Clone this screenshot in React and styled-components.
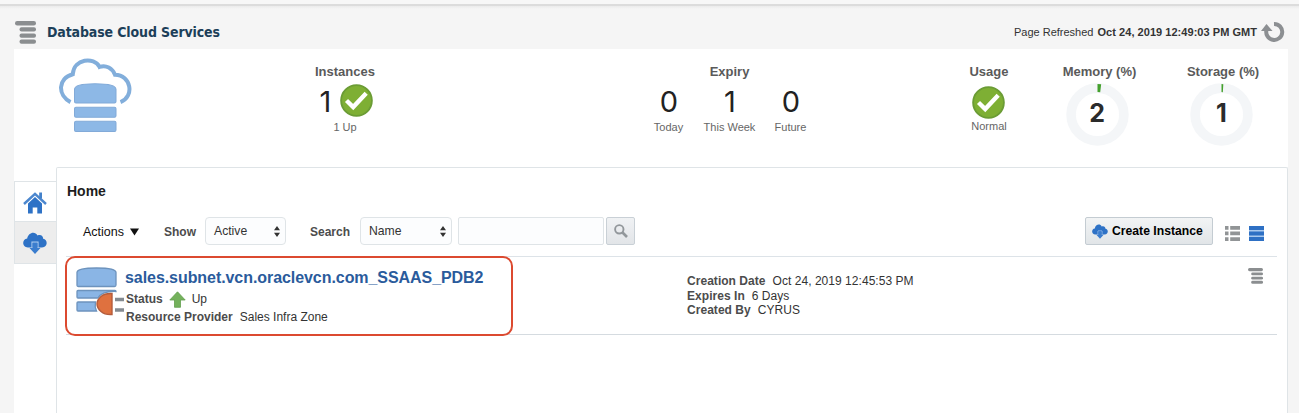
import React from "react";
import styled, { createGlobalStyle } from "styled-components";

const GlobalStyle = createGlobalStyle`
  * { box-sizing: border-box; }
  body {
    margin: 0;
    background: #f5f5f5;
    font-family: "Liberation Sans", Arial, sans-serif;
    font-size: 12px;
    color: #333;
    overflow: hidden;
  }
  svg { display: block; flex: none; }
`;

const Page = styled.div`
  height: 413px;
  display: flex;
  flex-direction: column;
  padding: 0 11px 0 14px;
  background: linear-gradient(#f7f7f7 0 4px, #dcdcdc 4px 6px, #ebebeb 6px, #f5f5f5 9px);
`;

const Header = styled.header`
  display: flex;
  align-items: flex-start;
  height: 49px;
  padding: 21px 3px 0 1px;
`;

const Title = styled.h1`
  margin: 2px 0 0 11px;
  flex: 1;
  font: bold 14px/18px "DejaVu Sans Condensed", "DejaVu Sans", Tahoma, sans-serif;
  font-stretch: condensed;
  letter-spacing: -0.13px;
  color: #1c3f59;
`;

const Refreshed = styled.div`
  margin: 4px 4px 0 0;
  font-size: 11px;
  line-height: 14px;
  color: #333;
  white-space: pre;
  b { margin-left: 1px; letter-spacing: 0.04px; }
`;

const Main = styled.main`
  flex: 1;
  display: flex;
  flex-direction: column;
  background: #fff;
`;

const Summary = styled.section`
  display: grid;
  grid-template-columns: 271px 120px 233px 183px 108px 120px 101px 13px 120px;
  height: 118px;
  padding-top: 15px;
`;

const CloudCell = styled.div`
  grid-column: 1;
  padding-left: 44px;
  margin-top: -6px;
`;

const Metric = styled.div`
  grid-column: ${(p) => p.$col};
  display: flex;
  flex-direction: column;
  align-items: center;
`;

const MetricLabel = styled.div`
  font-weight: bold;
  font-size: 13px;
  line-height: 16px;
  color: #5a5a5a;
`;

const MetricRow = styled.div`
  display: flex;
  align-items: center;
  margin-top: ${(p) => p.$top}px;
  margin-right: ${(p) => p.$shift || 0}px;
  height: 33px;
  gap: 7px;
`;

const BigNumber = styled.span`
  width: 16px;
  display: flex;
  justify-content: center;
  font: 29px/33px Inter, sans-serif;
  letter-spacing: -1px;
  padding-top: 1px;
  color: #222;
`;

const Caption = styled.div`
  margin-top: ${(p) => p.$top}px;
  font-size: 11px;
  line-height: 14px;
  color: #666;
`;

const ExpiryGrid = styled.div`
  display: grid;
  grid-template-columns: repeat(3, 61px);
`;

const ExpiryItem = styled.div`
  display: flex;
  flex-direction: column;
  align-items: center;
`;

const GaugeBox = styled.div`
  display: grid;
  place-items: center;
  margin: 3px ${(p) => p.$shift}px 0 0;
  > * { grid-area: 1 / 1; }
`;

const GaugeValue = styled.span`
  font: bold 25px/30px Inter, sans-serif;
  margin-top: -3px;
  color: #2b2b2b;
`;

const Body = styled.div`
  flex: 1;
  display: flex;
`;

const Tabs = styled.nav`
  width: 42px;
  padding-top: 14px;
`;

const Tab = styled.div`
  height: ${(p) => (p.$active ? "41px" : "42px")};
  display: flex;
  align-items: center;
  justify-content: center;
  padding: ${(p) => (p.$active ? "2px 1px 0 0" : "0 1px 0 0")};
  border: 1px solid #dfe4e7;
  border-right: 0;
  border-top-width: ${(p) => (p.$active ? "1px" : "0")};
  background: ${(p) => (p.$active ? "#fff" : "#ededed")};
`;

const Panel = styled.section`
  flex: 1;
  border: 1px solid #dfe4e7;
  border-bottom: 0;
  border-radius: 2px 2px 0 0;
  padding: 0 10px 0 10px;
`;

const PanelTitle = styled.h2`
  margin: 14px 0 16px;
  font-size: 14px;
  line-height: 18px;
  color: #1d1d1d;
`;

const Toolbar = styled.div`
  display: flex;
  align-items: center;
  height: 30px;
`;

const ActionsMenu = styled.div`
  display: flex;
  align-items: center;
  gap: 6px;
  width: 81px;
  margin: 2px 0 0 16px;
  font-size: 12.5px;
  color: #111;
`;

const FieldLabel = styled.label`
  width: ${(p) => p.$w}px;
  padding-top: 1px;
  font-weight: bold;
  color: #4c4c4c;
`;

const Select = styled.div`
  display: flex;
  align-items: center;
  justify-content: space-between;
  width: ${(p) => p.$w}px;
  height: 28px;
  margin-right: ${(p) => p.$gap}px;
  padding: 0 5px 0 8px;
  border: 1px solid #dfe4e7;
  border-radius: 4px;
  background: #fcfdfe;
  font-size: 12.2px;
`;

const SearchInput = styled.div`
  width: 146px;
  height: 28px;
  border: 1px solid #dfe4e7;
  border-radius: 2px;
  background: #fcfdfe;
`;

const SearchButton = styled.div`
  display: grid;
  place-items: center;
  width: 29px;
  height: 28px;
  margin-left: 2px;
  border: 1px solid #c9d0d6;
  border-radius: 2px;
  background: linear-gradient(#f0f2f4, #e2e5e8);
`;

const CreateButton = styled.div`
  display: flex;
  align-items: center;
  gap: 4px;
  width: 128px;
  height: 28px;
  margin: 0 12px 0 auto;
  padding-left: 6px;
  border: 1px solid #c4ccd2;
  border-radius: 2px;
  background: linear-gradient(#f2f4f5, #e1e5e8);
  font-weight: bold;
  font-size: 12.2px;
  color: #000;
  white-space: nowrap;
`;

const ViewIcons = styled.div`
  display: flex;
  gap: 9px;
  margin: 4px 13px 0 0;
`;

const InstanceRow = styled.div`
  position: relative;
  display: flex;
  height: 79px;
  margin: 10px 0 0 -1px;
  padding: 10px 14px 0 10px;
  border-top: 1px solid #dde3e8;
  border-bottom: 1px solid #d5dbe0;
`;

const RowMenu = styled.div`
  padding-top: 1px;
`;

const Highlight = styled.div`
  position: absolute;
  left: -1px;
  top: -1px;
  width: 448px;
  height: 80px;
  border: 2px solid #dc4a30;
  border-radius: 10px;
`;

const Info = styled.div`
  width: 561px;
  white-space: nowrap;
`;

const InstanceLink = styled.div`
  padding-top: 1px;
  font-weight: bold;
  font-size: 16px;
  line-height: 20px;
  color: #2a5b9c;
  letter-spacing: -0.065px;
`;

const Line = styled.div`
  display: flex;
  align-items: center;
  gap: ${(p) => p.$gap || 7}px;
  padding-left: 1px;
  line-height: ${(p) => p.$h}px;
  height: ${(p) => p.$h}px;
  b { color: #4c4c4c; }
`;

const Details = styled.div`
  flex: 1;
  padding-top: 7px;
  letter-spacing: 0.04px;
`;

const MenuBars = ({ w, h }) => (
  <svg width={w} height={h} viewBox="0 0 21 23" preserveAspectRatio="none">
    <g fill="#8b8e90">
      <rect x="0" y="0" width="21" height="4.5" rx="2.2" />
      <rect x="4.5" y="6.3" width="16.5" height="4.3" rx="2" />
      <rect x="4.5" y="12.4" width="16.5" height="4.3" rx="2" />
      <rect x="4.5" y="18.5" width="16.5" height="4.3" rx="2" />
    </g>
  </svg>
);

const RefreshIcon = () => (
  <svg width="24" height="22" viewBox="0 0 24 22">
    <path d="M13 2.900A8 8 0 1 1 5.600 8.500" fill="none" stroke="#8c8f92" strokeWidth="4" />
    <path d="M0 10L5.500 3L11.500 10Z" fill="#8c8f92" />
  </svg>
);

const CloudDatabase = () => (
  <svg width="75" height="76" viewBox="0 0 75 75" preserveAspectRatio="none">
    <path
      d="M12.5 43.5C-0.500 37 -0.500 20 14.800 16C16 0.500 36 -1.500 41.500 8.800C48 6.500 54.500 10 57 16.500C73 16.500 77 38 62.500 43.500"
      fill="none" stroke="#82aedb" strokeWidth="4"
    />
    <g fill="#8db8e6" stroke="#82aad8" strokeWidth="1">
      <path d="M16.500 43V31Q16.500 25.500 37 25.500Q58 25.500 58 31V43Q58 44.500 56.500 44.500H18Q16.500 44.500 16.500 43Z" />
      <rect x="16.500" y="48.500" width="41.500" height="10" rx="1.500" />
      <rect x="16.500" y="62.500" width="41.500" height="10" rx="1.500" />
    </g>
  </svg>
);

const Check = () => (
  <svg width="33" height="33" viewBox="0 0 33 33">
    <circle cx="16.500" cy="16.500" r="15.400" fill="#7eaf34" stroke="#6b9c35" strokeWidth="1.800" />
    <path d="M6.500 16.500L13.200 23L26.200 9.300" fill="none" stroke="#fff" strokeWidth="4.400" />
  </svg>
);

const Gauge = ({ value, shift }) => (
  <GaugeBox $shift={shift}>
    <svg width="63" height="63" viewBox="0 0 63 63">
      <circle cx="31.500" cy="31.500" r="26.400" fill="none" stroke="#f4f6f8" strokeWidth="9.600" />
      <circle
        cx="31.500" cy="31.500" r="26.400" fill="none" stroke="#43a02c" strokeWidth="8"
        pathLength="100" strokeDasharray={`${value} 100`} transform="rotate(-90 31.500 31.500)"
      />
    </svg>
    <GaugeValue>{value}</GaugeValue>
  </GaugeBox>
);

const HomeIcon = () => (
  <svg width="24" height="22" viewBox="0 0 24 22">
    <path d="M1 12L12 1.800L23 12" fill="none" stroke="#4c87ce" strokeWidth="2.400" />
    <rect x="16.200" y="0.500" width="2.800" height="6" fill="#4381ca" />
    <path d="M5 11.500L12 5L19 11.500V21.500H14.300V15.500H9.700V21.500H5Z" fill="#2e72c6" />
  </svg>
);

const CloudDownload = ({ w, h }) => (
  <svg width={w} height={h} viewBox="0 0 24 22">
    <path
      d="M5 15.500C-1.500 15.500-1 7 4.200 6.600C5 0.500 12-1.500 14.500 3.400C18 2.200 20 4 20.200 6.800C25 7.500 25 15.500 19 15.500Z"
      fill="#2e72c6"
    />
    <path d="M9 16V10.200H15V16" fill="none" stroke="#a9c9ee" strokeWidth="1.200" />
    <path d="M9.600 10.800H14.400V16H17.500L12 22L6.500 16H9.600Z" fill="#3b7dce" />
  </svg>
);

const Updown = () => (
  <svg width="6" height="11" viewBox="0 0 6 11">
    <path d="M0 4.300L3 0L6 4.300ZM0 6.700L3 11L6 6.700Z" fill="#333" />
  </svg>
);

const Magnifier = () => (
  <svg width="14" height="14" viewBox="0 0 14 14" fill="none" stroke="#92979b">
    <circle cx="5.300" cy="5.300" r="4.200" strokeWidth="1.900" />
    <path d="M8.500 8.500L13 13" strokeWidth="2.600" />
  </svg>
);

const ListIcon = () => (
  <svg width="15" height="15" viewBox="0 0 15 15" fill="#919496">
    <path d="M0 0H3.500V3.700H0ZM0 5.600H3.500V9.300H0ZM0 11.200H3.500V14.900H0ZM5.200 0H15V3.700H5.200ZM5.200 5.600H15V9.300H5.200ZM5.200 11.200H15V14.900H5.200Z" />
  </svg>
);

const CardsIcon = () => (
  <svg width="15" height="15" viewBox="0 0 15 15">
    <rect width="15" height="15" fill="#a9c9ee" />
    <path d="M0 0H15V4H0ZM0 5.600H15V9.400H0ZM0 11H15V15H0Z" fill="#2e70c4" />
  </svg>
);

const PluggableDatabase = () => (
  <svg width="49" height="50" viewBox="0 0 49 50">
    <g fill="#8ab5e5" stroke="#6d93bd" strokeWidth="1.300">
      <path d="M1 18V5.500Q1 1 20.500 1Q40 1 40 5.500V18Q40 19.500 38.500 19.500H2.500Q1 19.500 1 18Z" />
      <path d="M1 24.500Q1 23.500 2 23.500H39Q40 23.500 40 24.500Q26 24 22 31H2Q1 31 1 30Z" />
      <path d="M2 35H19.500Q18.500 40 20.500 44H2Q1 44 1 43V36Q1 35 2 35Z" />
    </g>
    <path d="M39 32.500H48M39 43H48" stroke="#858b91" strokeWidth="3.600" />
    <path d="M36 26.500V47.500Q29 48 25 44.500Q21 41 21 37Q21 33 25 29.500Q29 26 36 26.500Z" fill="#df713f" stroke="#b45c3c" strokeWidth="1.400" />
  </svg>
);

const UpArrow = () => (
  <svg width="17" height="17" viewBox="0 0 17 17">
    <path d="M8.500 0.800L16.200 9H11.500V16.300H5.500V9H0.800Z" fill="#74b15c" stroke="#62a04e" strokeWidth="0.800" />
  </svg>
);

const EXPIRY = [
  [0, "Today"],
  [1, "This Week"],
  [0, "Future"],
];

export default function App() {
  return (
    <>
      <GlobalStyle />
      <Page>
        <Header>
          <MenuBars w={21} h={23} />
          <Title>Database Cloud Services</Title>
          <Refreshed>
            Page Refreshed <b>Oct 24, 2019 12:49:03 PM GMT</b>
          </Refreshed>
          <RefreshIcon />
        </Header>
        <Main>
          <Summary>
            <CloudCell><CloudDatabase /></CloudCell>
            <Metric $col={2}>
              <MetricLabel>Instances</MetricLabel>
              <MetricRow $top={4}>
                <BigNumber>1</BigNumber>
                <Check />
              </MetricRow>
              <Caption $top={3}>1 Up</Caption>
            </Metric>
            <Metric $col={4}>
              <MetricLabel>Expiry</MetricLabel>
              <ExpiryGrid>
                {EXPIRY.map(([n, name]) => (
                  <ExpiryItem key={name}>
                    <MetricRow $top={4}><BigNumber>{n}</BigNumber></MetricRow>
                    <Caption $top={3}>{name}</Caption>
                  </ExpiryItem>
                ))}
              </ExpiryGrid>
            </Metric>
            <Metric $col={6}>
              <MetricLabel>Usage</MetricLabel>
              <MetricRow $top={6} $shift={2}><Check /></MetricRow>
              <Caption $top={0}>Normal</Caption>
            </Metric>
            <Metric $col={7}>
              <MetricLabel>Memory (%)</MetricLabel>
              <Gauge value={2} shift={5} />
            </Metric>
            <Metric $col={9}>
              <MetricLabel>Storage (%)</MetricLabel>
              <Gauge value={1} shift={3} />
            </Metric>
          </Summary>
          <Body>
            <Tabs>
              <Tab $active><HomeIcon /></Tab>
              <Tab><CloudDownload w={24} h={22} /></Tab>
            </Tabs>
            <Panel>
              <PanelTitle>Home</PanelTitle>
              <Toolbar>
                <ActionsMenu>
                  Actions
                  <svg width="9" height="8" viewBox="0 0 9 8"><path d="M0 0.500H9L4.500 7.500Z" fill="#111" /></svg>
                </ActionsMenu>
                <FieldLabel $w={41}>Show</FieldLabel>
                <Select $w={81} $gap={24}>Active<Updown /></Select>
                <FieldLabel $w={50}>Search</FieldLabel>
                <Select $w={92} $gap={6}>Name<Updown /></Select>
                <SearchInput />
                <SearchButton><Magnifier /></SearchButton>
                <CreateButton><CloudDownload w={16} h={15} />Create Instance</CreateButton>
                <ViewIcons><ListIcon /><CardsIcon /></ViewIcons>
              </Toolbar>
              <InstanceRow>
                <PluggableDatabase />
                <Info>
                  <InstanceLink>sales.subnet.vcn.oraclevcn.com_SSAAS_PDB2</InstanceLink>
                  <Line $h={23} $gap={6}><b>Status</b><UpArrow /><span>Up</span></Line>
                  <Line $h={13}><b>Resource Provider</b><span>Sales Infra Zone</span></Line>
                </Info>
                <Details>
                  <Line $h={14.5}><b>Creation Date</b><span>Oct 24, 2019 12:45:53 PM</span></Line>
                  <Line $h={14.5}><b>Expires In</b><span>6 Days</span></Line>
                  <Line $h={14.5}><b>Created By</b><span>CYRUS</span></Line>
                </Details>
                <RowMenu><MenuBars w={15} h={16} /></RowMenu>
                <Highlight />
              </InstanceRow>
            </Panel>
          </Body>
        </Main>
      </Page>
    </>
  );
}
